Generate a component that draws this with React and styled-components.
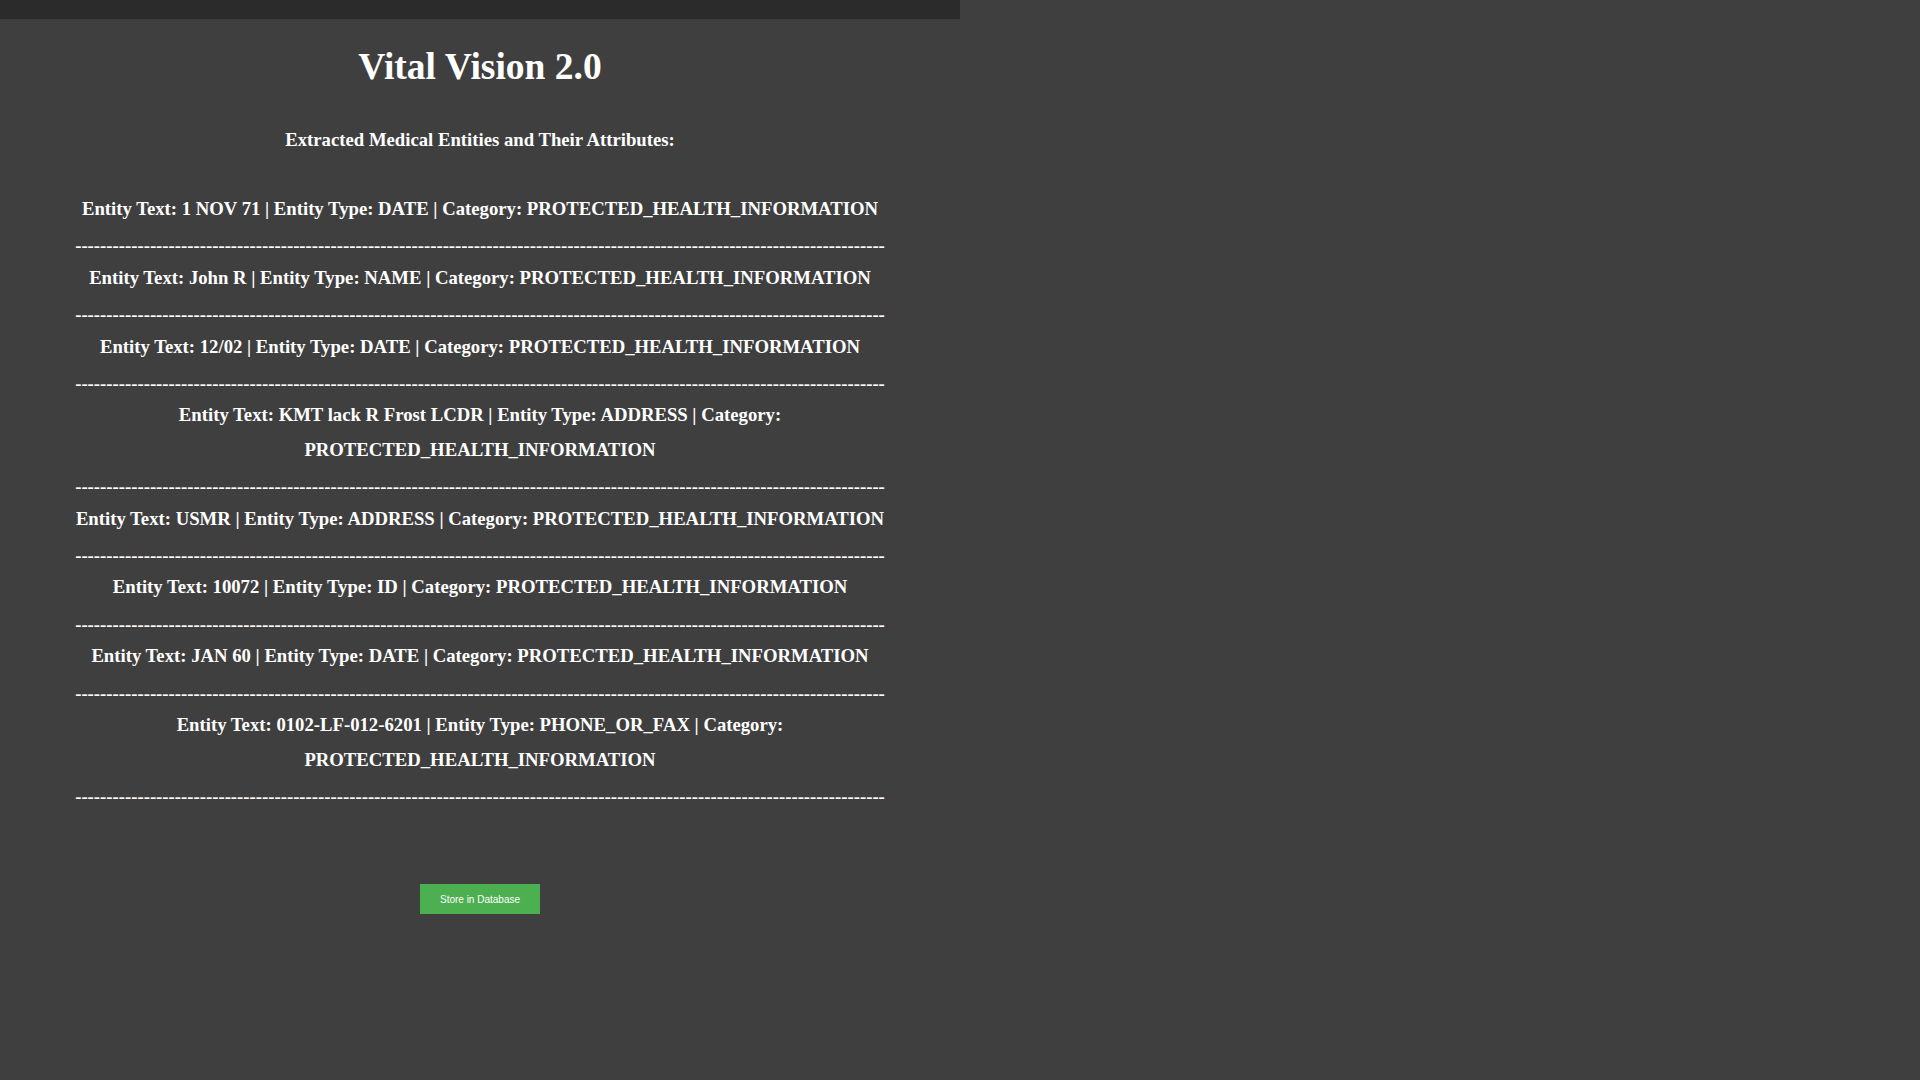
import React from 'react';
import styled, { createGlobalStyle } from 'styled-components';

const GlobalStyle = createGlobalStyle`
  html, body {
    margin: 0;
    padding: 0;
    background: #3f3f3f;
  }
  body {
    font-family: "Liberation Serif", "Times New Roman", serif;
    color: #ffffff;
  }
`;

const TopBar = styled.div`
  width: 960px;
  height: 19px;
  background: #2b2b2b;
`;

const Main = styled.main`
  width: 960px;
  box-sizing: border-box;
  padding: 0 72px;
  text-align: center;
`;

const Title = styled.h1`
  margin: 26px 0 0;
  font-size: 37.5px;
  line-height: 44px;
  font-weight: bold;
`;

const SubTitle = styled.h3`
  margin: 40px 0 0;
  font-size: 18.72px;
  line-height: 22px;
  font-weight: bold;
`;

const EntityList = styled.div`
  margin-top: 41px;
  font-size: 18.72px;
  line-height: 34.4px;
  font-weight: bold;
`;

const EntityLine = styled.div``;

// dashes sit a touch lower in the reference than the glyph does here
const Divider = styled.div`
  white-space: nowrap;
  overflow: hidden;
  padding-top: 5px;
  line-height: 29.4px;
`;

const StoreButton = styled.button`
  display: block;
  margin: 73px auto 0;
  width: 120px;
  height: 30px;
  border: none;
  background: #4caf50;
  color: #ffffff;
  font-family: "Liberation Sans", Arial, sans-serif;
  font-size: 10px;
  cursor: pointer;
`;

const entities = [
  { text: '1 NOV 71', type: 'DATE' },
  { text: 'John R', type: 'NAME' },
  { text: '12/02', type: 'DATE' },
  { text: 'KMT lack R Frost LCDR', type: 'ADDRESS' },
  { text: 'USMR', type: 'ADDRESS' },
  { text: '10072', type: 'ID' },
  { text: 'JAN 60', type: 'DATE' },
  { text: '0102-LF-012-6201', type: 'PHONE_OR_FAX' },
];

const DASHES = '-'.repeat(130);

export default function App() {
  return (
    <>
      <GlobalStyle />
      <TopBar />
      <Main>
        <Title>Vital Vision 2.0</Title>
        <SubTitle>Extracted Medical Entities and Their Attributes:</SubTitle>
        <EntityList>
          {entities.map((e, idx) => (
            <React.Fragment key={idx}>
              <EntityLine>
                Entity Text: {e.text} | Entity Type: {e.type} | Category: PROTECTED_HEALTH_INFORMATION
              </EntityLine>
              <Divider>{DASHES}</Divider>
            </React.Fragment>
          ))}
        </EntityList>
        <StoreButton>Store in Database</StoreButton>
      </Main>
    </>
  );
}
